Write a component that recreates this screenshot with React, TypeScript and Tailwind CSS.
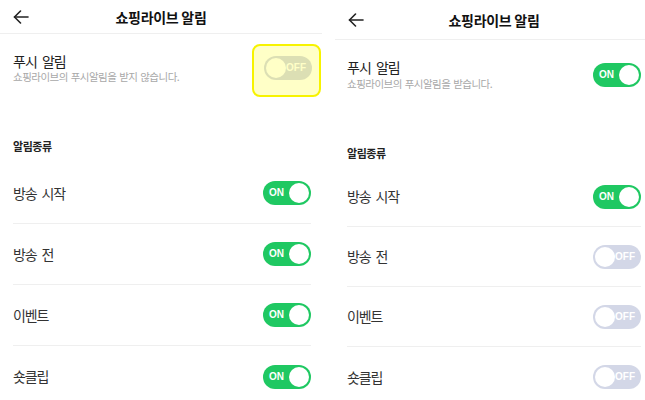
import { ReactNode } from 'react';

const FONT = { fontFamily: '"Noto Sans CJK KR", "Noto Sans", sans-serif' };

function Toggle({ on }: { on: boolean }) {
  if (on) {
    return (
      <div className="relative flex h-6 w-12 shrink-0 items-center rounded-full bg-[#1fc862] pl-[6px]">
        <span className="text-[10px] font-bold leading-none text-white" style={{ fontFamily: '"Liberation Sans", sans-serif' }}>
          ON
        </span>
        <span className="absolute right-[2px] top-[2px] h-5 w-5 rounded-full bg-white" />
      </div>
    );
  }
  return (
    <div className="relative flex h-6 w-12 shrink-0 items-center justify-end rounded-full bg-[#d3d7e7] pr-[6px]">
      <span className="text-[10px] font-bold leading-none text-white" style={{ fontFamily: '"Liberation Sans", sans-serif' }}>
        OFF
      </span>
      <span className="absolute left-[2px] top-[2px] h-5 w-5 rounded-full bg-white" />
    </div>
  );
}

function BackArrow() {
  return (
    <svg width="16" height="14" viewBox="0 0 16 14" fill="none" stroke="#222" strokeWidth="1.6" strokeLinecap="round" strokeLinejoin="round">
      <path d="M15 7H1.5" />
      <path d="M7.5 1L1.5 7l6 6" />
    </svg>
  );
}

type Item = { label: string; on: boolean };

function Panel({
  variant,
  pushOn,
  items,
  toggleSlot,
}: {
  variant: 'left' | 'right';
  pushOn: boolean;
  items: Item[];
  toggleSlot?: (t: ReactNode) => ReactNode;
}) {
  const left = variant === 'left';
  const toggle = <Toggle on={pushOn} />;
  return (
    <div className={left ? 'w-[322px] shrink-0' : 'w-[310px] shrink-0'}>
      <header
        className={`relative flex items-center justify-center border-b border-[#efefef] ${left ? 'h-[34px]' : 'h-[40px] pl-[8px]'}`}
      >
        <div className="absolute left-[13px] top-1/2 -translate-y-1/2">
          <BackArrow />
        </div>
        <h1 className="text-[14px] font-bold leading-none tracking-[-0.02em] text-[#111]">쇼핑라이브 알림</h1>
      </header>

      <div className={left ? 'ml-[13px] w-[298px] pt-[18px]' : 'ml-[12px] w-[294px] pt-[18px]'}>
        <div className="flex items-center justify-between">
          <div>
            <div className="text-[14px] leading-[18px] tracking-[-0.07em] text-[#222] [word-spacing:3px]">푸시 알림</div>
            <div className={`text-[10.5px] tracking-[-0.05em] text-[#a8a8a8] [word-spacing:1px] ${left ? 'leading-[14px]' : 'leading-[16px]'}`}>
              {pushOn ? '쇼핑라이브의 푸시알림을 받습니다.' : '쇼핑라이브의 푸시알림을 받지 않습니다.'}
            </div>
          </div>
          {toggleSlot ? toggleSlot(toggle) : toggle}
        </div>

        <div className={`text-[11px] font-bold leading-4 tracking-[-0.04em] text-[#222] ${left ? 'mt-[54px]' : 'mt-[53px]'}`}>
          알림종류
        </div>

        <div className={left ? 'mt-[9px]' : 'mt-[6px]'}>
          {items.map((it, i) => (
            <div
              key={it.label}
              className={`flex items-center justify-between ${left ? 'h-[61px]' : 'h-[60px]'} ${i < items.length - 1 ? 'border-b border-[#efefef]' : ''}`}
            >
              <span className="text-[14px] tracking-[-0.08em] text-[#333] [word-spacing:3px]">{it.label}</span>
              <Toggle on={it.on} />
            </div>
          ))}
        </div>
      </div>
    </div>
  );
}

export default function App() {
  return (
    <div className="flex h-[400px] w-[645px] overflow-hidden bg-white" style={FONT}>
      <Panel
        variant="left"
        pushOn={false}
        items={[
          { label: '방송 시작', on: true },
          { label: '방송 전', on: true },
          { label: '이벤트', on: true },
          { label: '숏클립', on: true },
        ]}
        toggleSlot={(t) => (
          <div className="relative mr-[-1px]">
            {t}
            <div className="absolute -left-[12px] -top-[12px] h-[53px] w-[69px] rounded-[8px] border-2 border-[#f7f300] bg-[rgba(255,255,0,0.22)]" />
          </div>
        )}
      />
      <div className="w-[13px] shrink-0" />
      <Panel
        variant="right"
        pushOn
        items={[
          { label: '방송 시작', on: true },
          { label: '방송 전', on: false },
          { label: '이벤트', on: false },
          { label: '숏클립', on: false },
        ]}
      />
    </div>
  );
}
